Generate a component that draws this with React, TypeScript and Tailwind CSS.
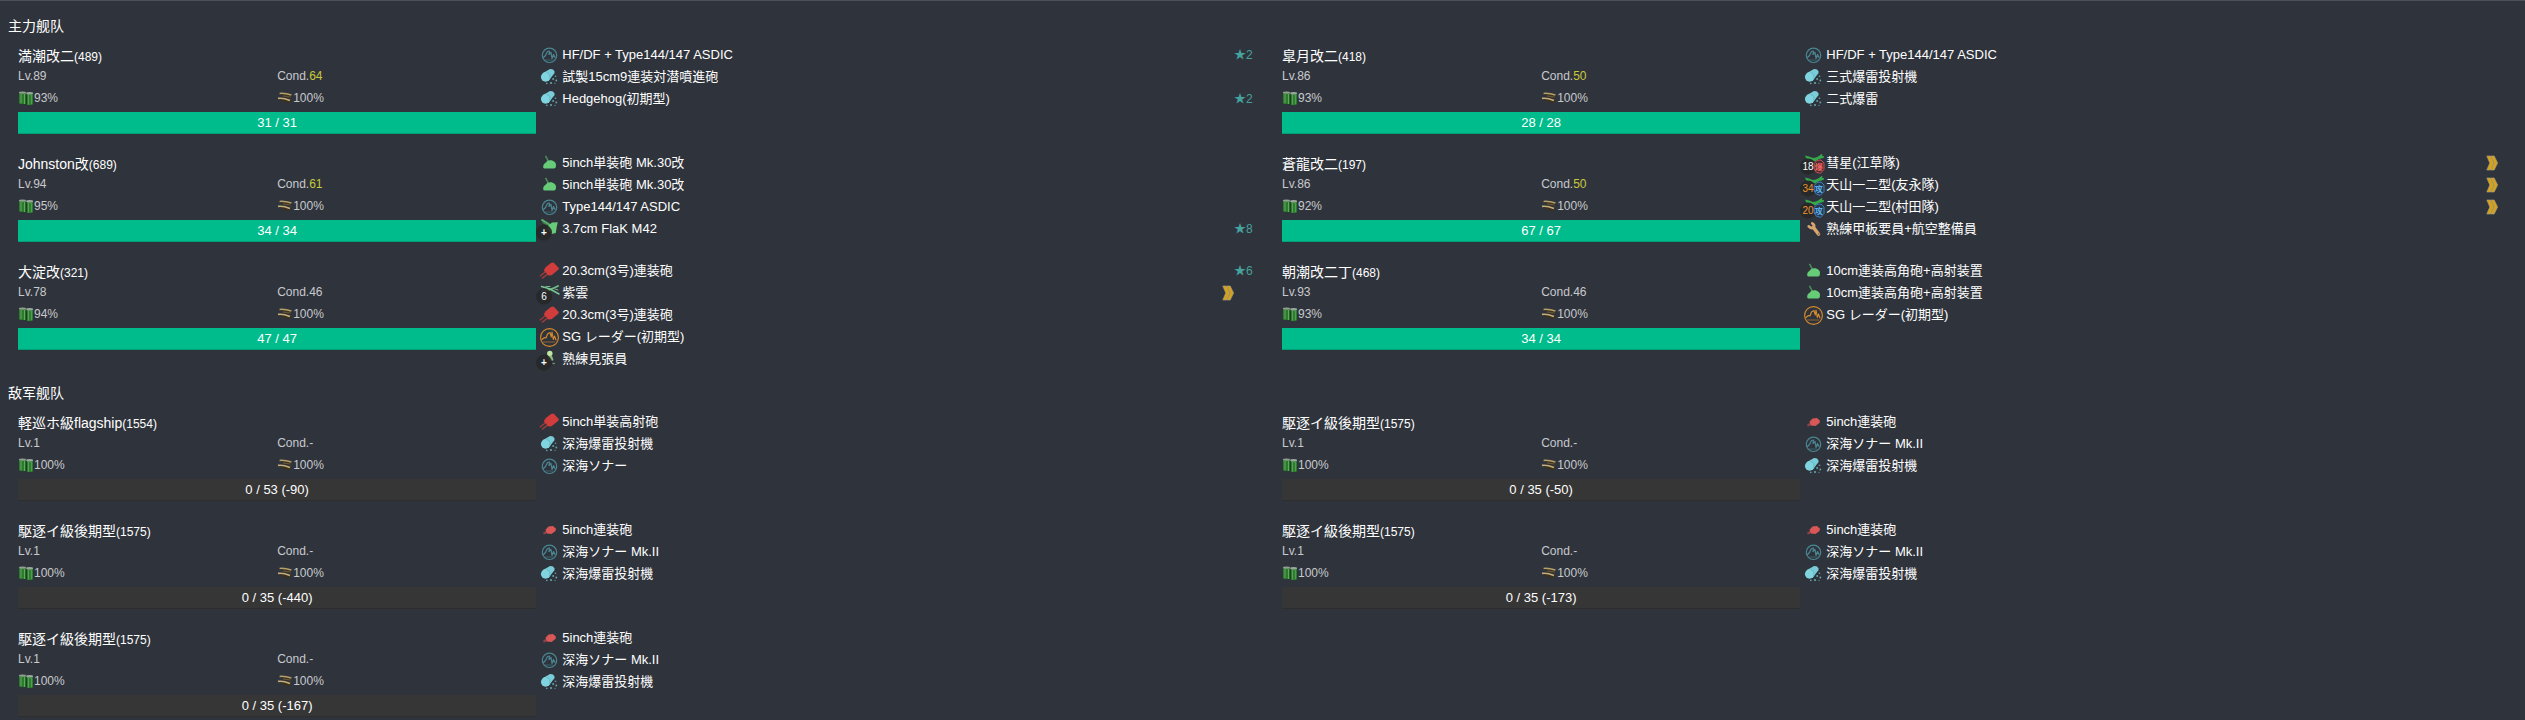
import type { ReactNode } from "react";

type IconKind =
  | "sonar"
  | "depth"
  | "highAngle"
  | "aaGun"
  | "mainGun"
  | "smallGun"
  | "seaplane"
  | "radar"
  | "lookout"
  | "bomber"
  | "torpedo"
  | "wrench";

interface Gear {
  icon: IconKind;
  name: string;
  star?: number;
  ace?: boolean;
  badge?: string;
  badgeLow?: boolean;
}

interface Ship {
  name: string;
  id: number;
  lv: number;
  cond: string;
  sparkle?: boolean;
  fuel: string;
  hp: string;
  percent: number;
  gears: Gear[];
}

const hfdf = "HF/DF + Type144/147 ASDIC";

const mainFleet: Ship[] = [
  {
    name: "満潮改二", id: 489, lv: 89, cond: "64", sparkle: true, fuel: "93%", hp: "31 / 31", percent: 100,
    gears: [
      { icon: "sonar", name: hfdf, star: 2 },
      { icon: "depth", name: "試製15cm9連装対潜噴進砲" },
      { icon: "depth", name: "Hedgehog(初期型)", star: 2 },
    ],
  },
  {
    name: "皐月改二", id: 418, lv: 86, cond: "50", sparkle: true, fuel: "93%", hp: "28 / 28", percent: 100,
    gears: [
      { icon: "sonar", name: hfdf },
      { icon: "depth", name: "三式爆雷投射機" },
      { icon: "depth", name: "二式爆雷" },
    ],
  },
  {
    name: "Johnston改", id: 689, lv: 94, cond: "61", sparkle: true, fuel: "95%", hp: "34 / 34", percent: 100,
    gears: [
      { icon: "highAngle", name: "5inch単装砲 Mk.30改" },
      { icon: "highAngle", name: "5inch単装砲 Mk.30改" },
      { icon: "sonar", name: "Type144/147 ASDIC" },
      { icon: "aaGun", name: "3.7cm FlaK M42", star: 8, badge: "+" },
    ],
  },
  {
    name: "蒼龍改二", id: 197, lv: 86, cond: "50", sparkle: true, fuel: "92%", hp: "67 / 67", percent: 100,
    gears: [
      { icon: "bomber", name: "彗星(江草隊)", ace: true, badge: "18" },
      { icon: "torpedo", name: "天山一二型(友永隊)", ace: true, badge: "34", badgeLow: true },
      { icon: "torpedo", name: "天山一二型(村田隊)", ace: true, badge: "20", badgeLow: true },
      { icon: "wrench", name: "熟練甲板要員+航空整備員" },
    ],
  },
  {
    name: "大淀改", id: 321, lv: 78, cond: "46", fuel: "94%", hp: "47 / 47", percent: 100,
    gears: [
      { icon: "mainGun", name: "20.3cm(3号)連装砲", star: 6 },
      { icon: "seaplane", name: "紫雲", ace: true, badge: "6" },
      { icon: "mainGun", name: "20.3cm(3号)連装砲" },
      { icon: "radar", name: "SG レーダー(初期型)" },
      { icon: "lookout", name: "熟練見張員", badge: "+" },
    ],
  },
  {
    name: "朝潮改二丁", id: 468, lv: 93, cond: "46", fuel: "93%", hp: "34 / 34", percent: 100,
    gears: [
      { icon: "highAngle", name: "10cm連装高角砲+高射装置" },
      { icon: "highAngle", name: "10cm連装高角砲+高射装置" },
      { icon: "radar", name: "SG レーダー(初期型)" },
    ],
  },
];

const destroyer = (damage: number): Ship => ({
  name: "駆逐イ級後期型",
  id: 1575,
  lv: 1,
  cond: "-",
  fuel: "100%",
  hp: `0 / 35 (-${damage})`,
  percent: 0,
  gears: [
    { icon: "smallGun", name: "5inch連装砲" },
    { icon: "sonar", name: "深海ソナー Mk.II" },
    { icon: "depth", name: "深海爆雷投射機" },
  ],
});

const enemyFleet: Ship[] = [
  {
    name: "軽巡ホ級flagship", id: 1554, lv: 1, cond: "-", fuel: "100%", hp: "0 / 53 (-90)", percent: 0,
    gears: [
      { icon: "mainGun", name: "5inch単装高射砲" },
      { icon: "depth", name: "深海爆雷投射機" },
      { icon: "sonar", name: "深海ソナー" },
    ],
  },
  destroyer(50),
  destroyer(440),
  destroyer(173),
  destroyer(167),
];

const planeWings = (
  <path d="M3 4.5 L7 5.5 L11 7 L14 6.5 L17 5 L19.5 3 L20.5 3.5 L20 5 L22 5 L21.5 7 L17 8 L13 10.5 L10 9 L6 8.5 L4 7 Z" fill="#35a84c" />
);

const drawings: Record<IconKind, ReactNode> = {
  sonar: (
    <g fill="none" stroke="#4a8793" strokeLinecap="round" strokeLinejoin="round">
      <circle cx="11.5" cy="12.3" r="7.2" strokeWidth="1.2" />
      <path d="M5.5 14.5 L7.5 12.5 L9.5 8.5 L11.5 8 L11 11.5 L13 9.5 L14 15.5 L15.5 11.5 L17 14.5" strokeWidth="1.2" />
      <path d="M7.5 17 H15.5" strokeWidth="0.6" strokeDasharray="1 1" />
    </g>
  ),
  depth: (
    <g>
      <path d="M4.6 8.2 L12 4 Q15.5 3.8 16.6 6.4 Q17 8.5 15 10 L10.5 16 Z" fill="#79ccd8" />
      <circle cx="7.6" cy="12" r="4.7" fill="#7fd4df" />
      <path d="M8.5 7.5 Q13 8.5 11.8 14" fill="none" stroke="#5aa9b6" strokeWidth="0.7" />
      <g fill="#66a3ad">
        <circle cx="17.5" cy="11.2" r="0.8" />
        <circle cx="15.2" cy="14" r="1" />
        <circle cx="18.3" cy="15.5" r="0.9" />
        <circle cx="13" cy="18" r="1.1" />
        <circle cx="8.8" cy="18.4" r="0.8" />
        <circle cx="17" cy="18.3" r="0.6" />
      </g>
    </g>
  ),
  highAngle: (
    <g>
      <path d="M7.5 4.8 L10.5 10.5" stroke="#4a8c5a" strokeWidth="1.6" />
      <path d="M5.3 17 Q4.8 13.5 7 12.3 L9.5 9.8 Q11 8.9 13.5 9.2 Q17.6 10.4 18 13.5 L17.8 16 Q17.5 17.4 16 17.4 H6.5 Z" fill="#66cc77" />
    </g>
  ),
  aaGun: (
    <g>
      <path d="M3.5 2.6 L13 8.6" stroke="#55b069" strokeWidth="2" />
      <path d="M4.5 5.5 L12 9.5" stroke="#4a8c5a" strokeWidth="1" />
      <path d="M10.5 8.5 L14 5.5 L19.8 5.2 L18.8 9.5 L17.8 16 L13.5 17 L9 12 Z" fill="#66cc77" />
    </g>
  ),
  mainGun: (
    <g>
      <path d="M1.8 17.3 L9 11.5 M4 19.4 L11 14" stroke="#a33a3c" strokeWidth="1.4" />
      <path d="M5.8 11.4 L7.5 8.3 L13 4 L15.6 3.6 L21 9.3 L20 11 L13.5 16.3 L10.5 16.5 Z" fill="#d13c3c" />
    </g>
  ),
  smallGun: (
    <g>
      <path d="M4.8 15 L9 12 L11 14.5 L6 16.4 Z" fill="#8f4248" />
      <path d="M7.5 11.8 L10.5 8.6 L15 8 L18 10.8 L17.5 13 L13.5 16 L9 15.4 Z" fill="#d95757" />
    </g>
  ),
  seaplane: (
    <g fill="none" strokeLinecap="round">
      <path d="M4 10 Q11 10 20 5" stroke="#6fb985" strokeWidth="2" />
      <path d="M3.5 5.5 L12 8 L21 13" stroke="#7cc694" strokeWidth="1.5" />
      <path d="M8 5.5 H12 M17 8 L20 9" stroke="#6fb985" strokeWidth="1" />
    </g>
  ),
  radar: (
    <g fill="none" stroke="#d98c2c" strokeLinecap="round" strokeLinejoin="round">
      <circle cx="11.5" cy="12.5" r="8.9" strokeWidth="1.1" />
      <path d="M4 14.5 L6.5 12.5 L8 13 L9.5 9 L12 7.5 L13.3 12 L14 7 L15.3 14.5 L16.5 11 L18 15" strokeWidth="1.1" />
      <path d="M5.5 17 H17.5" strokeWidth="0.6" strokeDasharray="2 1" />
    </g>
  ),
  lookout: (
    <g>
      <circle cx="11.8" cy="6.5" r="2.7" fill="#c0e8a4" />
      <path d="M10 9 L14 8.8 L15.5 13 L13 14.5 L10.5 12 Z" fill="#8fbd80" />
      <path d="M14.5 16.5 H17" stroke="#75946b" strokeWidth="1.2" />
    </g>
  ),
  bomber: planeWings,
  torpedo: planeWings,
  wrench: (
    <g fill="none" stroke="#d6a66e" strokeLinecap="round" strokeLinejoin="round">
      <path d="M10.3 6.4 Q12.9 8 11.6 10.4 Q9 12 6.8 9.4" strokeWidth="2.8" />
      <path d="M11.6 10.6 L16.6 17.2" strokeWidth="3.4" />
      <circle cx="16.6" cy="17" r="0.4" stroke="#8a6a48" strokeWidth="0.8" />
    </g>
  ),
};

function GearIcon({ gear }: { gear: Gear }) {
  const mark = gear.icon === "bomber" ? "爆" : gear.icon === "torpedo" ? "攻" : null;
  const red = gear.icon === "bomber";
  return (
    <svg viewBox="0 0 24 24" className="size-6 shrink-0 overflow-visible" aria-hidden="true">
      {drawings[gear.icon]}
      {gear.badge && <circle cx="6" cy="15.6" r="8" fill="#262728" fillOpacity="0.92" />}
      {mark && (
        <>
          <path
            d="M15 9.4 L19 9 L22 12 V18.5 L18.5 22.3 L14.5 21.3 L12.2 18 V12.5 Z"
            fill={red ? "#4b2d33" : "#263a4e"}
            stroke={red ? "#c94f4f" : "#3f82ba"}
          />
          <text
            x="16.8"
            y="18.9"
            textAnchor="middle"
            fontSize="8"
            fontWeight="700"
            fill={red ? "#f06464" : "#5cb0ef"}
          >
            {mark}
          </text>
        </>
      )}
      {gear.badge && (
        <text
          x="6"
          y="19"
          textAnchor="middle"
          fontSize="10"
          fontWeight={gear.badge === "+" ? 700 : 400}
          fill={gear.badgeLow ? "#f0932b" : "#ffffff"}
        >
          {gear.badge}
        </text>
      )}
    </svg>
  );
}

function AceMark() {
  return (
    <svg viewBox="0 0 12 16" className="h-4 w-3" role="img" aria-label="Ace">
      <g fill="#d6a21e" stroke="#a59c78" strokeWidth="0.7" strokeLinejoin="round">
        <path d="M0.8 1 H4.6 L7.8 8 L4.6 15 H0.8 L3.8 8 Z" />
        <path d="M4.8 1 H8.2 L11.6 8 L8.2 15 H4.8 L8.2 8 Z" />
      </g>
    </svg>
  );
}

function FuelIcon() {
  return (
    <svg viewBox="0 0 16 16" className="size-4" role="img" aria-label="Fuel">
      <path d="M1 2.5 H8 V14 H2 L1 13 Z" fill="#2c7a2c" />
      <path d="M8.5 3.5 H15 V14 L14 15 H9 Z" fill="#2a7d2a" />
      <path d="M3 4 V13 M6.5 4 V14" stroke="#63a763" strokeWidth="1" />
      <path d="M10.5 5 V14.5 M13.4 5 V14" stroke="#55a055" strokeWidth="1" />
      <path d="M8.2 4 V14" stroke="#1c3a20" strokeWidth="1" />
      <ellipse cx="4.5" cy="2.6" rx="3.6" ry="1.2" fill="#8f9f90" />
      <ellipse cx="11.6" cy="3.3" rx="3.5" ry="1.2" fill="#9aa89b" />
    </svg>
  );
}

function AmmoIcon() {
  return (
    <svg viewBox="0 0 16 16" className="size-4" role="img" aria-label="Ammo">
      <path d="M2.5 3 L14.8 4.2 L14 7.5 L9 7.8 Z" fill="#3d3320" />
      <path d="M1 8.5 L6 7.4 L14.5 9.5 L13 13 L8 12.8 Z" fill="#3a3020" />
      <path d="M2.6 3.4 Q8 3 14.4 5" stroke="#b59f6b" strokeWidth="1.5" fill="none" />
      <path d="M1 8.4 Q6 7.6 13 10.6" stroke="#c3ae7c" strokeWidth="1.6" fill="none" />
      <path d="M6 6 L13.5 7" stroke="#75633c" strokeWidth="0.8" />
    </svg>
  );
}

function ShipCard({ ship }: { ship: Ship }) {
  return (
    <article className="flex gap-0.5">
      <div className="w-[42%] shrink-0">
        <h3 className="h-6 truncate text-sm/6">
          {ship.name}
          <span className="text-xs">({ship.id})</span>
        </h3>
        <div className="grid grid-cols-2 text-xs/4 text-[#c8c9cc]">
          <div>Lv.{ship.lv}</div>
          <div>
            Cond.<span className={ship.sparkle ? "text-[#c9c93a]" : ""}>{ship.cond}</span>
          </div>
          <div className="flex h-7 items-center">
            <FuelIcon />
            {ship.fuel}
          </div>
          <div className="flex h-7 items-center">
            <AmmoIcon />
            100%
          </div>
        </div>
        <div
          role="progressbar"
          aria-label="HP"
          aria-valuenow={ship.percent}
          className={
            "h-[22px] text-center text-[13px]/[21px] shadow-[inset_0_-1px_0_rgba(0,0,0,0.15)] " +
            (ship.percent > 0 ? "bg-[#00bc8c]" : "bg-[#363636]")
          }
        >
          {ship.hp}
        </div>
      </div>
      <ul className="min-w-0 flex-1">
        {ship.gears.map((gear, i) => (
          <li key={i} className="flex h-[22px] items-center text-[13px]/[22px]">
            <GearIcon gear={gear} />
            <span className="flex-1 truncate">{gear.name}</span>
            {gear.ace && <AceMark />}
            <span className="w-[18px] text-right text-xs whitespace-nowrap text-[#45a29e]">
              {gear.star && `★${gear.star}`}
            </span>
          </li>
        ))}
      </ul>
    </article>
  );
}

function Fleet({ title, ships }: { title: string; ships: Ship[] }) {
  return (
    <section className="pt-3">
      <h2 className="mb-[7px] pl-2 text-sm/[22px]">{title}</h2>
      <div className="grid auto-rows-[minmax(108px,auto)] grid-cols-2 gap-x-[30px] pr-[9px] pl-[18px]">
        {ships.map((ship, i) => (
          <ShipCard key={i} ship={ship} />
        ))}
      </div>
    </section>
  );
}

export default function App() {
  return (
    <main className="h-screen overflow-hidden border-t border-[#4a515b] bg-[#2f343c] pt-0.5 font-['Liberation_Sans','Noto_Sans_CJK_SC',sans-serif] text-white">
      <Fleet title="主力舰队" ships={mainFleet} />
      <Fleet title="敌军舰队" ships={enemyFleet} />
    </main>
  );
}
